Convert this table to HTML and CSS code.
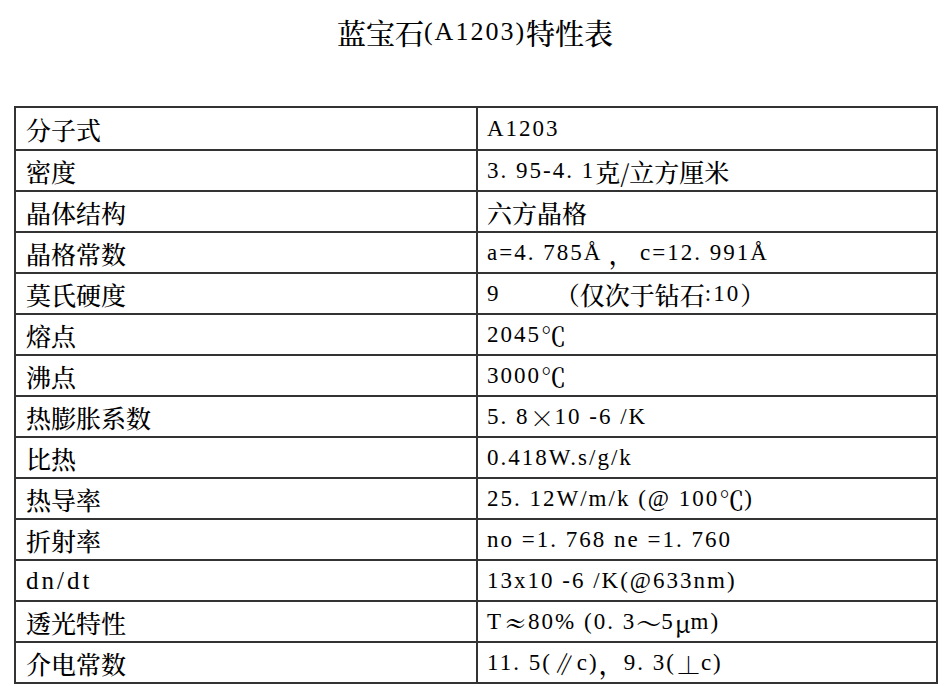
FILE: index.html
```html
<!DOCTYPE html>
<html lang="zh-CN">
<head>
<meta charset="utf-8">
<title>蓝宝石(A1203)特性表</title>
<link rel="stylesheet" href="styles.css">
</head>
<body>
<h1 class="title">蓝宝石<span class="en">(A1203)</span>特性表</h1>
<div class="sheet">
  <div class="cell">分子式</div><div class="cell"><span class="en">A1203</span></div>
  <div class="cell">密度</div><div class="cell"><span class="en">3. 95-4. 1</span>克/立方厘米</div>
  <div class="cell">晶体结构</div><div class="cell">六方晶格</div>
  <div class="cell">晶格常数</div><div class="cell"><span class="en">a=4. 785Å</span> ， <span class="en">c=12. 991Å</span></div>
  <div class="cell">莫氏硬度</div><div class="cell"><span class="en">9       </span>（仅次于钻石<span class="en">:10</span>）</div>
  <div class="cell">熔点</div><div class="cell"><span class="en">2045</span>℃</div>
  <div class="cell">沸点</div><div class="cell"><span class="en">3000</span>℃</div>
  <div class="cell">热膨胀系数</div><div class="cell"><span class="en">5. 8</span>×<span class="en">10 -6 /K</span></div>
  <div class="cell">比热</div><div class="cell"><span class="en">0.418W.s/g/k</span></div>
  <div class="cell">热导率</div><div class="cell"><span class="en">25. 12W/m/k (@ 100</span>℃<span class="en">)</span></div>
  <div class="cell">折射率</div><div class="cell"><span class="en">no =1. 768 ne =1. 760</span></div>
  <div class="cell"><span class="en en-key">dn/dt</span></div><div class="cell"><span class="en">13x10 -6 /K(@633nm)</span></div>
  <div class="cell">透光特性</div><div class="cell"><span class="en">T</span>≈<span class="en">80% (0. 3</span>～<span class="en">5</span>μ<span class="en">m)</span></div>
  <div class="cell">介电常数</div><div class="cell"><span class="en">11. 5(</span>∥<span class="en">c)</span>，<span class="en">9. 3(</span>⊥<span class="en">c)</span></div>
</div>
</body>
</html>
```
FILE: styles.css
```css
html, body {
  margin: 0;
  padding: 0;
  background: #ffffff;
}
body {
  width: 950px;
  height: 687px;
  overflow: hidden;
  color: #000;
  font-family: "Noto Serif CJK SC", "Noto Sans CJK SC", serif;
}
.title {
  margin: 0;
  height: 64px;
  display: flex;
  align-items: center;
  justify-content: center;
  font-size: 29px;
  font-weight: 500;
}
.en {
  font-family: "Liberation Serif", serif;
  font-size: 23px;
  letter-spacing: 2px;
}
.en-key {
  font-size: 25px;
  letter-spacing: 3px;
}
.title .en {
  font-size: 26px;
  font-weight: 400;
}
.sheet {
  margin: 42px 0 0 14px;
  width: 924px;
  box-sizing: border-box;
  border-top: 2px solid #333;
  border-left: 2px solid #333;
  display: grid;
  grid-template-columns: 462px 1fr;
  grid-template-rows: 43px;
  grid-auto-rows: 41px;
}
.cell {
  box-sizing: border-box;
  border-right: 2px solid #333;
  border-bottom: 2px solid #333;
  padding: 0 0 0 10px;
  display: flex;
  align-items: center;
  font-size: 25px;
  font-weight: 500;
  white-space: pre;
}
.cell:nth-child(even) {
  padding-left: 9px;
}
```
